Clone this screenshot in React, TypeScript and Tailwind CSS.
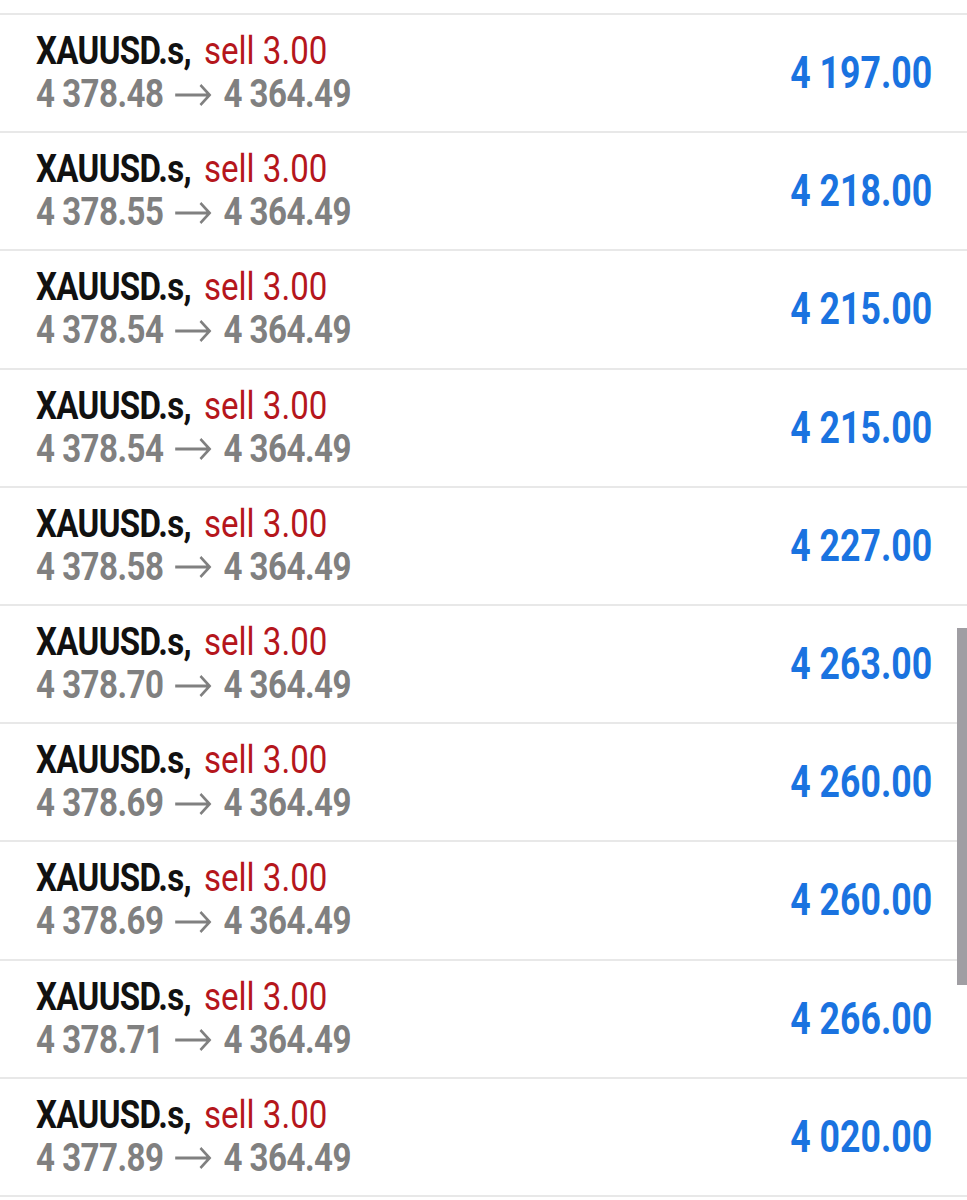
const trades = [
  { open: "4 378.48", close: "4 364.49", profit: "4 197.00" },
  { open: "4 378.55", close: "4 364.49", profit: "4 218.00" },
  { open: "4 378.54", close: "4 364.49", profit: "4 215.00" },
  { open: "4 378.54", close: "4 364.49", profit: "4 215.00" },
  { open: "4 378.58", close: "4 364.49", profit: "4 227.00" },
  { open: "4 378.70", close: "4 364.49", profit: "4 263.00" },
  { open: "4 378.69", close: "4 364.49", profit: "4 260.00" },
  { open: "4 378.69", close: "4 364.49", profit: "4 260.00" },
  { open: "4 378.71", close: "4 364.49", profit: "4 266.00" },
  { open: "4 377.89", close: "4 364.49", profit: "4 020.00" },
];

function Arrow() {
  return (
    <svg width="43" height="24" viewBox="0 0 43 24" className="mx-[13px] shrink-0" fill="none">
      <path d="M1 12H40M30 2L40.5 12L30 22" stroke="#808080" strokeWidth="3" strokeLinecap="butt" strokeLinejoin="miter" />
    </svg>
  );
}

function TradeRow({ open, close, profit }: { open: string; close: string; profit: string }) {
  return (
    <div className="flex h-[118.2px] items-center justify-between border-t-2 border-[#e8e8e8] pl-[36px] pr-[35px]">
      <div className="origin-left scale-x-[0.87] text-[38px] leading-[43px] whitespace-nowrap">
        <div>
          <span className="font-bold tracking-[-0.8px] text-[#111111]">XAUUSD.s,</span>
          <span className="pl-[15px] text-[#b5161c]">sell 3.00</span>
        </div>
        <div className="flex items-center font-bold tracking-[-0.6px] text-[#808080]">
          <span>{open}</span>
          <Arrow />
          <span>{close}</span>
        </div>
      </div>
      <div className="origin-right scale-x-[0.81] text-[44px] font-bold leading-none whitespace-nowrap text-[#1a73e0]">
        {profit}
      </div>
    </div>
  );
}

export default function App() {
  return (
    <div className="relative h-[1200px] w-[967px] overflow-hidden bg-white" style={{ fontFamily: "Roboto, 'Liberation Sans', sans-serif" }}>
      <div className="h-[13px]" />
      {trades.map((t, i) => (
        <TradeRow key={i} {...t} />
      ))}
      <div className="border-t-2 border-[#e8e8e8]" />
      <div className="absolute right-0 top-[628px] h-[357px] w-[10px] bg-[#a09ea3]" />
    </div>
  );
}
